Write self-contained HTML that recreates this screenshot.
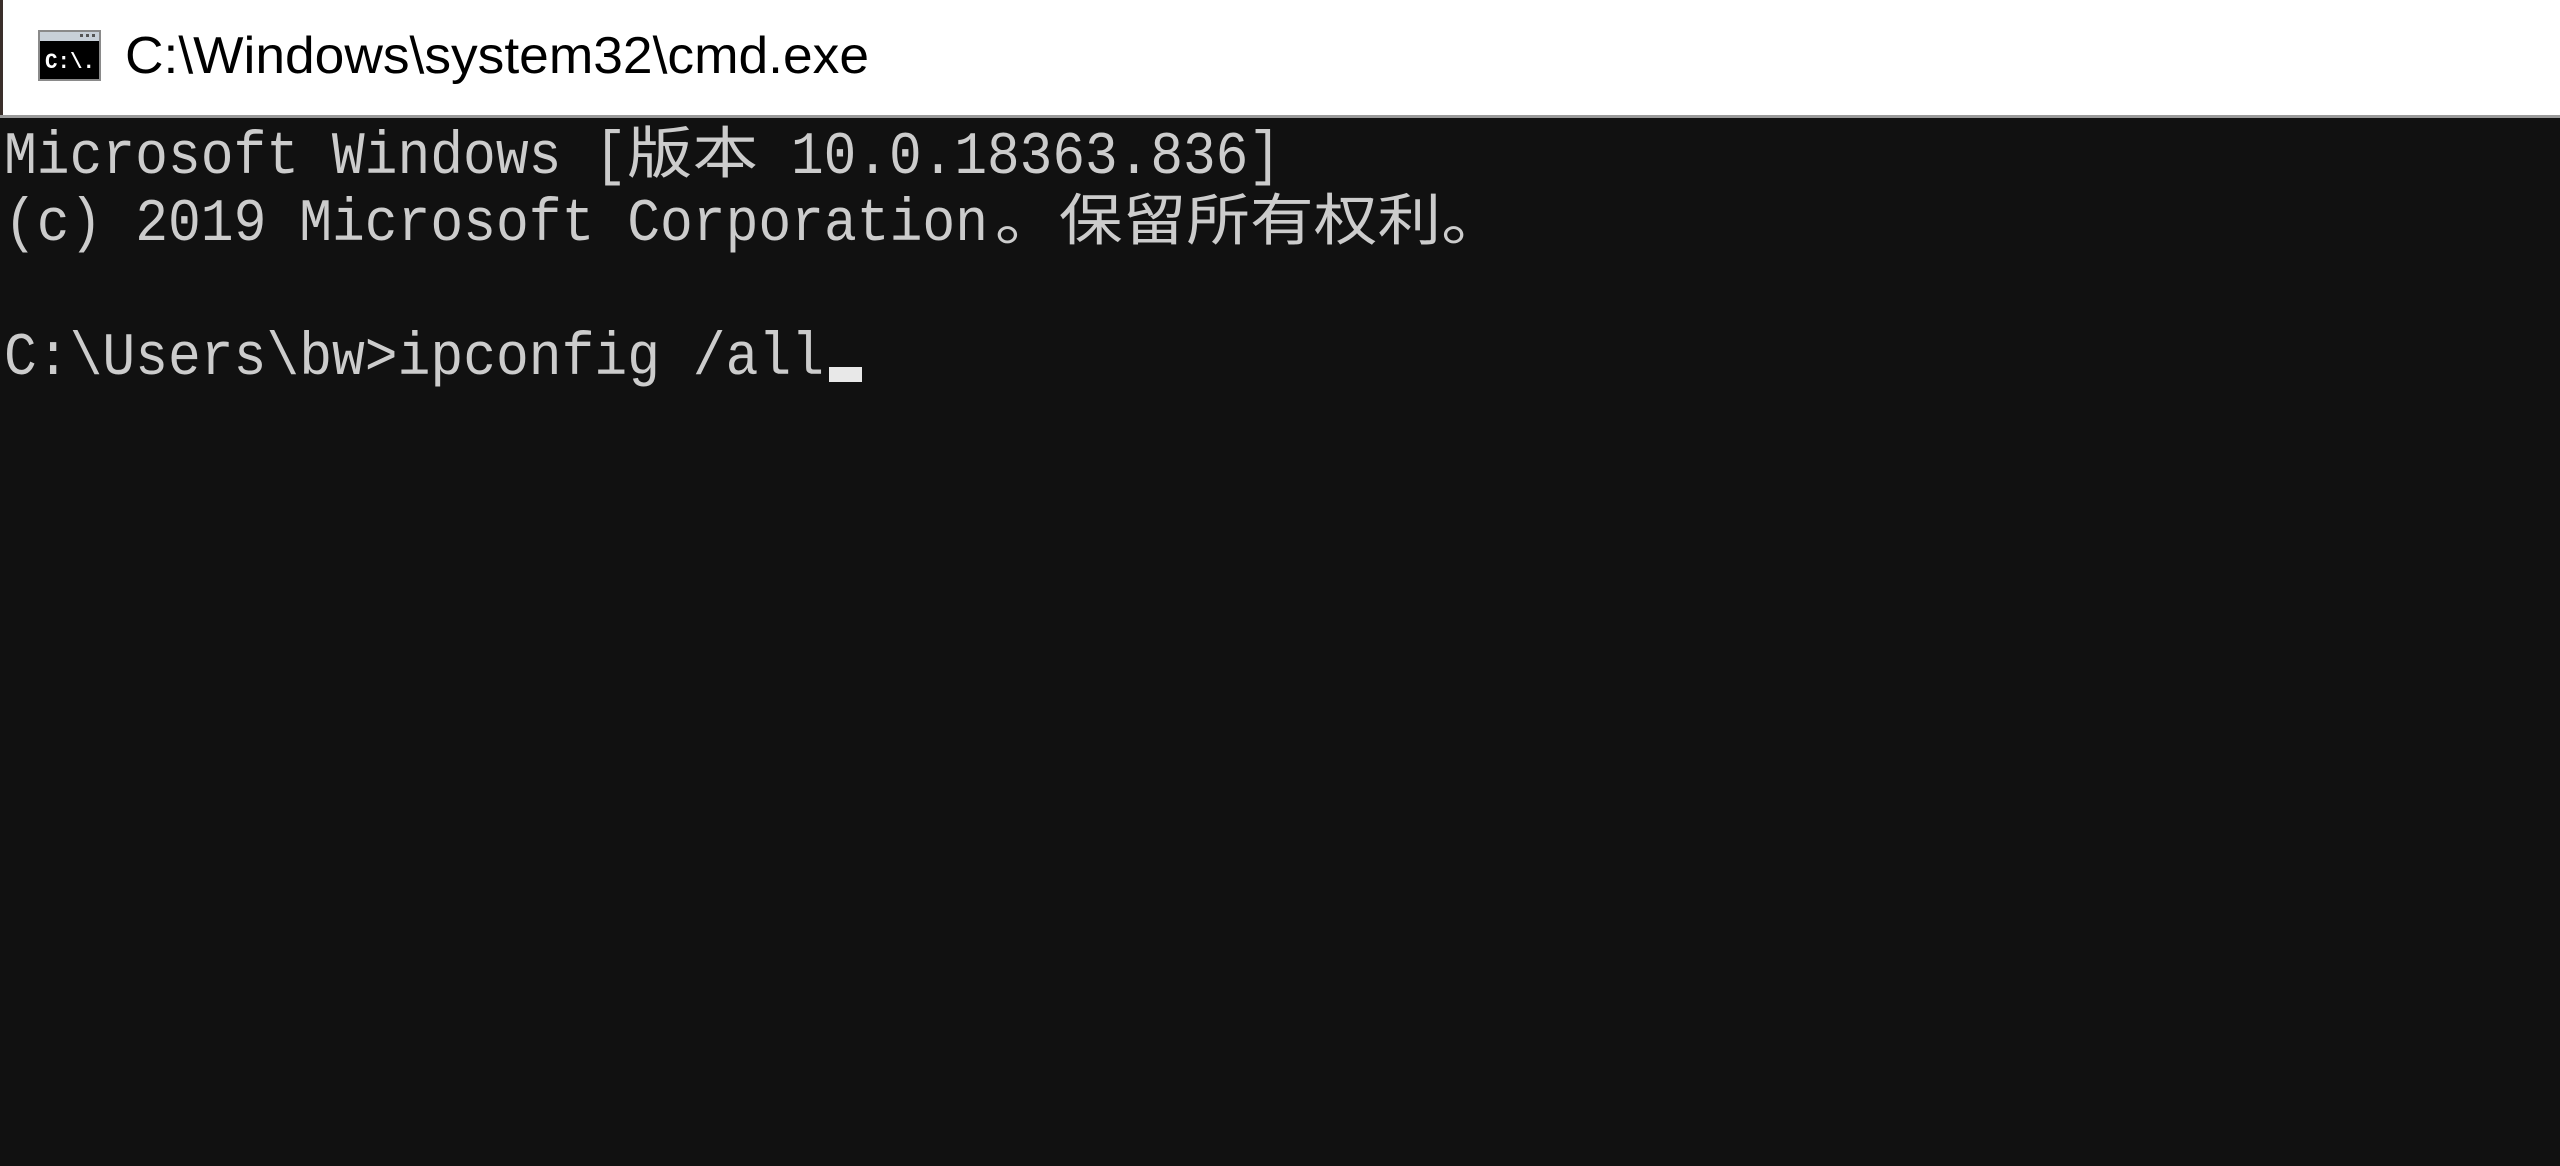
<!DOCTYPE html>
<html><head><meta charset="utf-8"><style>
html,body{margin:0;padding:0;width:2560px;height:1166px;overflow:hidden;background:#111111}
svg{display:block}
</style></head><body>
<svg width="2560" height="1166" xmlns="http://www.w3.org/2000/svg">
<rect x="0" y="0" width="2560" height="1166" fill="#111111"/>
<rect x="0" y="0" width="2560" height="117" fill="#ffffff"/>
<rect x="0" y="0" width="3" height="117" fill="#3a2f2a"/>
<rect x="0" y="115" width="2560" height="3" fill="#9a9a9a"/>
<!-- icon -->
<rect x="38" y="30" width="63" height="51" fill="#8a8a8a"/>
<rect x="40" y="32" width="59" height="9" fill="#c8d0d8"/>
<rect x="80" y="34" width="3" height="3" fill="#555"/><rect x="86" y="34" width="3" height="3" fill="#555"/><rect x="92" y="34" width="3" height="3" fill="#555"/>
<rect x="40" y="41" width="59" height="38" fill="#000"/>
<text x="45" y="68" font-family="Liberation Mono, monospace" font-size="22" font-weight="bold" fill="#fff" textLength="50" lengthAdjust="spacingAndGlyphs">C:\.</text>
<text x="125" y="73" font-family="Liberation Sans, sans-serif" font-size="52" fill="#000" textLength="744" lengthAdjust="spacingAndGlyphs">C:\Windows\system32\cmd.exe</text>
<g font-family="Liberation Mono, monospace" font-size="60" fill="#cccccc">
<text x="4" y="173" textLength="623" lengthAdjust="spacingAndGlyphs">Microsoft Windows [</text>
<text x="627" y="173" font-family="Noto Sans CJK SC, sans-serif" font-size="56" textLength="131" lengthAdjust="spacingAndGlyphs">版本</text>
<text x="791" y="173" textLength="490" lengthAdjust="spacingAndGlyphs">10.0.18363.836]</text>
<text x="4" y="240" textLength="984" lengthAdjust="spacingAndGlyphs">(c) 2019 Microsoft Corporation</text>
<text x="995" y="240" font-family="Noto Sans CJK SC, sans-serif" font-size="56" textLength="510" lengthAdjust="spacingAndGlyphs">。保留所有权利。</text>
<text x="4" y="374" textLength="820" lengthAdjust="spacingAndGlyphs">C:\Users\bw&gt;ipconfig /all</text>
</g>
<rect x="829" y="367" width="33" height="15" fill="#e8e8e8"/>
</svg>
</body></html>
